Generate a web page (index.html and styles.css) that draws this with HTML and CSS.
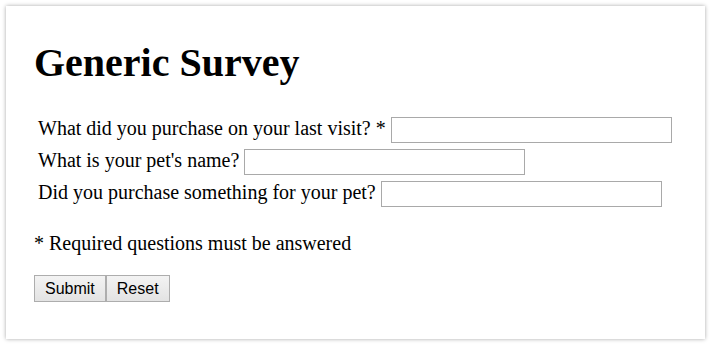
FILE: index.html
```html
<!DOCTYPE html>
<html lang="en">
<head>
<meta charset="utf-8">
<title>Generic Survey</title>
<link rel="stylesheet" href="styles.css">
</head>
<body>
<div class="card">
  <h1 class="title">Generic Survey</h1>
  <form class="survey">
    <div class="rows">
      <div class="row">
        <label class="question" for="q1">What did you purchase on your last visit? *</label>
        <input class="field" id="q1" type="text">
      </div>
      <div class="row">
        <label class="question" for="q2">What is your pet's name?</label>
        <input class="field" id="q2" type="text">
      </div>
      <div class="row">
        <label class="question" for="q3">Did you purchase something for your pet?</label>
        <input class="field" id="q3" type="text">
      </div>
    </div>
    <p class="note">* Required questions must be answered</p>
    <div class="actions">
      <button class="btn" type="submit">Submit</button>
      <button class="btn" type="reset">Reset</button>
    </div>
  </form>
</div>
</body>
</html>
```
FILE: styles.css
```css
html, body {
  margin: 0;
  padding: 0;
  background: #ffffff;
}

body {
  font-family: "Liberation Serif", "Times New Roman", serif;
  font-size: 20px;
  color: #000000;
}

.card {
  margin: 6px;
  height: 333px;
  box-sizing: border-box;
  padding: 34px 28px 0 28px;
  background: #ffffff;
  box-shadow: 0 0 4px rgba(0, 0, 0, 0.35);
}

.title {
  margin: 0;
  font-size: 40px;
  line-height: 46px;
  font-weight: bold;
}

.survey {
  margin: 0;
}

.rows {
  margin-top: 31px;
  padding-left: 4px;
  display: flex;
  flex-direction: column;
  gap: 6px;
}

.row {
  display: flex;
  align-items: flex-start;
  gap: 5px;
  height: 26px;
}

.question {
  line-height: 22px;
  white-space: nowrap;
}

.field {
  width: 281px;
  height: 26px;
  box-sizing: border-box;
  margin: 0;
  padding: 1px 3px;
  border: 1px solid #a9a9a9;
  background: #ffffff;
  font-family: "Liberation Sans", Arial, sans-serif;
  font-size: 16px;
}

.note {
  margin: 25px 0 0 0;
  line-height: 22px;
}

.actions {
  margin-top: 21px;
  display: flex;
}

.btn {
  margin: 0;
  height: 27px;
  box-sizing: border-box;
  padding: 0 10px;
  border: 1px solid #adadad;
  border-radius: 0;
  background: linear-gradient(#f3f3f3, #e3e3e3);
  color: #000000;
  font-family: "Liberation Sans", Arial, sans-serif;
  font-size: 16px;
  line-height: 25px;
}
```
